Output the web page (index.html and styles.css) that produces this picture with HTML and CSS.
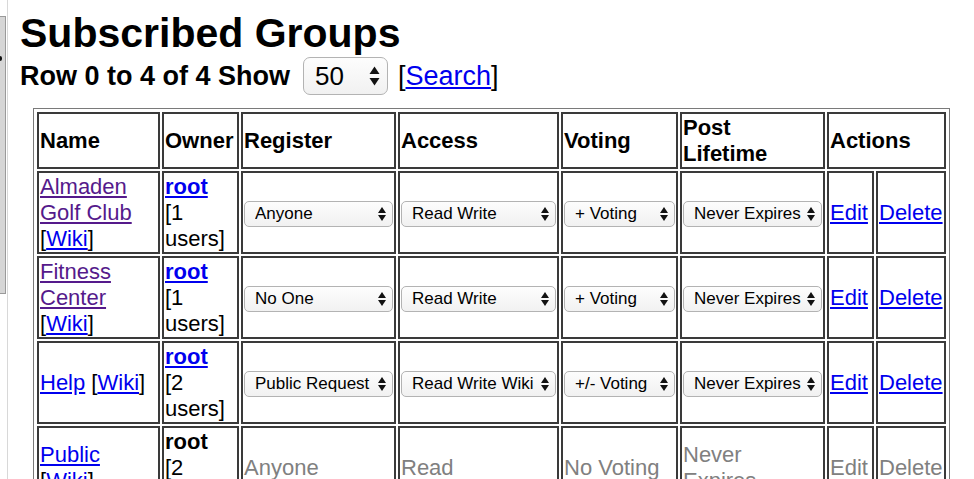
FILE: index.html
```html
<!DOCTYPE html>
<html>
<head>
<meta charset="utf-8">
<title>Subscribed Groups</title>
<link rel="stylesheet" href="styles.css">
</head>
<body>
<div class="side">
  <div class="side-panel"><span class="side-dot"></span></div>
</div>
<div class="side-rule"></div>
<main class="main">
  <h1 class="title">Subscribed Groups</h1>
  <div class="pager">
    <span class="pager-label">Row 0 to 4 of 4 Show</span>
    <span class="sel sel-big">
      <select class="select select-big"><option>50</option></select>
      <svg class="arrows" width="11" height="20" viewBox="0 0 11 20"><polygon points="5.5,0.5 10.5,8 0.5,8"/><polygon points="0.5,12 10.5,12 5.5,19.5"/></svg>
    </span>
    <span class="pager-search">[<a href="#" class="link">Search</a>]</span>
  </div>
  <table class="groups">
    <colgroup>
      <col class="c-name"><col class="c-owner"><col class="c-reg"><col class="c-acc"><col class="c-vote"><col class="c-post"><col class="c-edit"><col class="c-del">
    </colgroup>
    <thead>
      <tr>
        <th>Name</th><th>Owner</th><th>Register</th><th>Access</th><th>Voting</th><th>Post<br>Lifetime</th><th colspan="2">Actions</th>
      </tr>
    </thead>
    <tbody>
      <tr>
        <td><a href="#" class="visited">Almaden Golf Club</a> [<a href="#" class="link">Wiki</a>]</td>
        <td><a href="#" class="link owner">root</a><br>[1 users]</td>
        <td><span class="sel"><select class="select"><option>Anyone</option></select><svg class="arrows" width="8" height="15" viewBox="0 0 8 15"><polygon points="4,0.5 8,6.5 0,6.5"/><polygon points="0,8.5 8,8.5 4,14.5"/></svg></span></td>
        <td><span class="sel"><select class="select"><option>Read Write</option></select><svg class="arrows" width="8" height="15" viewBox="0 0 8 15"><polygon points="4,0.5 8,6.5 0,6.5"/><polygon points="0,8.5 8,8.5 4,14.5"/></svg></span></td>
        <td><span class="sel"><select class="select"><option>+ Voting</option></select><svg class="arrows" width="8" height="15" viewBox="0 0 8 15"><polygon points="4,0.5 8,6.5 0,6.5"/><polygon points="0,8.5 8,8.5 4,14.5"/></svg></span></td>
        <td><span class="sel"><select class="select"><option>Never Expires</option></select><svg class="arrows" width="8" height="15" viewBox="0 0 8 15"><polygon points="4,0.5 8,6.5 0,6.5"/><polygon points="0,8.5 8,8.5 4,14.5"/></svg></span></td>
        <td><a href="#" class="link">Edit</a></td>
        <td><a href="#" class="link">Delete</a></td>
      </tr>
      <tr>
        <td><a href="#" class="visited">Fitness Center</a> [<a href="#" class="link">Wiki</a>]</td>
        <td><a href="#" class="link owner">root</a><br>[1 users]</td>
        <td><span class="sel"><select class="select"><option>No One</option></select><svg class="arrows" width="8" height="15" viewBox="0 0 8 15"><polygon points="4,0.5 8,6.5 0,6.5"/><polygon points="0,8.5 8,8.5 4,14.5"/></svg></span></td>
        <td><span class="sel"><select class="select"><option>Read Write</option></select><svg class="arrows" width="8" height="15" viewBox="0 0 8 15"><polygon points="4,0.5 8,6.5 0,6.5"/><polygon points="0,8.5 8,8.5 4,14.5"/></svg></span></td>
        <td><span class="sel"><select class="select"><option>+ Voting</option></select><svg class="arrows" width="8" height="15" viewBox="0 0 8 15"><polygon points="4,0.5 8,6.5 0,6.5"/><polygon points="0,8.5 8,8.5 4,14.5"/></svg></span></td>
        <td><span class="sel"><select class="select"><option>Never Expires</option></select><svg class="arrows" width="8" height="15" viewBox="0 0 8 15"><polygon points="4,0.5 8,6.5 0,6.5"/><polygon points="0,8.5 8,8.5 4,14.5"/></svg></span></td>
        <td><a href="#" class="link">Edit</a></td>
        <td><a href="#" class="link">Delete</a></td>
      </tr>
      <tr>
        <td><a href="#" class="link">Help</a> [<a href="#" class="link">Wiki</a>]</td>
        <td><a href="#" class="link owner">root</a><br>[2 users]</td>
        <td><span class="sel"><select class="select"><option>Public Request</option></select><svg class="arrows" width="8" height="15" viewBox="0 0 8 15"><polygon points="4,0.5 8,6.5 0,6.5"/><polygon points="0,8.5 8,8.5 4,14.5"/></svg></span></td>
        <td><span class="sel"><select class="select"><option>Read Write Wiki</option></select><svg class="arrows" width="8" height="15" viewBox="0 0 8 15"><polygon points="4,0.5 8,6.5 0,6.5"/><polygon points="0,8.5 8,8.5 4,14.5"/></svg></span></td>
        <td><span class="sel"><select class="select"><option>+/- Voting</option></select><svg class="arrows" width="8" height="15" viewBox="0 0 8 15"><polygon points="4,0.5 8,6.5 0,6.5"/><polygon points="0,8.5 8,8.5 4,14.5"/></svg></span></td>
        <td><span class="sel"><select class="select"><option>Never Expires</option></select><svg class="arrows" width="8" height="15" viewBox="0 0 8 15"><polygon points="4,0.5 8,6.5 0,6.5"/><polygon points="0,8.5 8,8.5 4,14.5"/></svg></span></td>
        <td><a href="#" class="link">Edit</a></td>
        <td><a href="#" class="link">Delete</a></td>
      </tr>
      <tr class="disabled">
        <td><a href="#" class="link">Public</a><br>[<a href="#" class="link">Wiki</a>]</td>
        <td><b class="owner-plain">root</b><br>[2 users]</td>
        <td class="muted">Anyone</td>
        <td class="muted">Read</td>
        <td class="muted">No Voting</td>
        <td class="muted">Never<br>Expires</td>
        <td class="muted">Edit</td>
        <td class="muted">Delete</td>
      </tr>
    </tbody>
  </table>
</main>
</body>
</html>
```
FILE: styles.css
```css
html, body {
  margin: 0;
  padding: 0;
  background: #fff;
}
body {
  display: flex;
  align-items: stretch;
  min-height: 479px;
  font-family: "Liberation Sans", Arial, sans-serif;
  color: #000;
  overflow: hidden;
}
.side {
  width: 7px;
  flex: none;
}
.side-panel {
  position: relative;
  margin-top: 16px;
  height: 276px;
  width: 5px;
  background: #d6d6d6;
  border: 1px solid #9a9a9a;
  border-left: none;
}
.side-dot {
  position: absolute;
  left: 0;
  top: 39px;
  width: 2px;
  height: 5px;
  background: #111;
  border-radius: 0 2px 2px 0;
}
.side-rule {
  width: 1px;
  flex: none;
  background: #d8d8d8;
}
.main {
  flex: 1;
  padding-left: 12px;
  min-width: 0;
}
.title {
  margin: 0;
  padding-top: 10px;
  font-size: 41px;
  line-height: 47px;
  font-weight: bold;
}
.pager {
  display: flex;
  align-items: center;
  height: 38px;
}
.pager-label {
  font-weight: bold;
  font-size: 27px;
  line-height: 32px;
  margin-right: 13px;
}
.pager-search {
  font-size: 27px;
  line-height: 32px;
  margin-left: 10px;
}
.link {
  color: #0000ee;
  text-decoration: underline;
}
.visited {
  color: #551a8b;
  text-decoration: underline;
}
.owner {
  font-weight: bold;
}
.sel {
  position: relative;
  display: inline-block;
  width: 100%;
  vertical-align: middle;
}
.sel-big {
  width: 85px;
}
.select {
  -webkit-appearance: none;
  appearance: none;
  display: block;
  width: 100%;
  height: 26px;
  margin: 0;
  padding: 0 18px 0 10px;
  box-sizing: border-box;
  border: 1px solid #b3b3b3;
  border-radius: 5px;
  background: linear-gradient(#fdfdfd, #f1f1f1);
  font-family: "Liberation Sans", Arial, sans-serif;
  font-size: 17px;
  color: #000;
  line-height: 24px;
}
.select-big {
  height: 38px;
  font-size: 26px;
  padding-left: 11px;
  border-radius: 7px;
  line-height: 36px;
}
.arrows {
  position: absolute;
  right: 7px;
  top: 50%;
  transform: translateY(-50%);
  fill: #111;
  pointer-events: none;
}
.sel-big .arrows {
  right: 8px;
}
.groups {
  margin: 13px 0 0 13px;
  border: 1px solid #7a7a7a;
  padding: 1px;
  border-collapse: separate;
  border-spacing: 2px;
  table-layout: fixed;
  width: 917px;
  font-size: 22px;
  line-height: 26px;
}
.c-name { width: 123px; }
.c-owner { width: 77px; }
.c-reg { width: 155px; }
.c-acc { width: 161px; }
.c-vote { width: 117px; }
.c-post { width: 145px; }
.c-edit { width: 47px; }
.c-del { width: 70px; }
.groups th,
.groups td {
  border: 2px solid #3a3a3a;
  padding: 1px 1px 0;
  text-align: left;
  vertical-align: middle;
  overflow: hidden;
}
.groups th {
  font-weight: bold;
}
.muted {
  color: #808080;
}
.owner-plain {
  font-weight: bold;
}
```
